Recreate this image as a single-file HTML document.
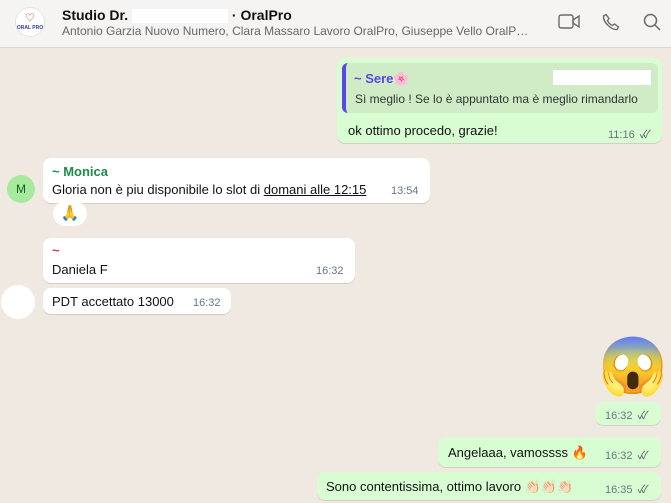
<!DOCTYPE html>
<html><head><meta charset="utf-8"><style>
*{margin:0;padding:0;box-sizing:border-box}
body{width:671px;height:503px;overflow:hidden;background:#efe9e1;font-family:"Liberation Sans","Noto Sans CJK JP",sans-serif;position:relative;color:#111}
.hdr{position:absolute;left:0;top:0;width:671px;height:48px;background:#f5f4f3;border-bottom:1px solid #d9d6d2}
.abs{position:absolute}
.b{position:absolute;border-radius:8px;background:#fff;box-shadow:0 1px 0.5px rgba(0,0,0,.12)}
.g{background:#d9fdd3}
.t{font-size:13px;white-space:nowrap}
.tm{font-size:11px;color:#667781;white-space:nowrap}
.ck{color:#556069;font-size:11px;letter-spacing:-4px;margin-left:2px}
</style></head><body>
<div class="hdr">
 <div class="abs" style="left:15px;top:7px;width:30px;height:30px;border-radius:50%;background:#fff;border:1px solid #e4e4e4;text-align:center">
  <div style="font-size:9px;color:#d33;margin-top:3px">♡</div>
  <div style="font-size:5px;font-weight:bold;color:#2a3d9a;margin-top:1px">ORAL PRO</div>
 </div>
 <div class="abs t" style="left:62px;top:7px;font-size:14px;font-weight:bold">Studio Dr. <span style="display:inline-block;width:96px;height:14px;background:#fff;vertical-align:middle"></span> · OralPro</div>
 <div class="abs" style="left:62px;top:24px;font-size:12px;color:#666;white-space:nowrap">Antonio Garzia Nuovo Numero, Clara Massaro Lavoro OralPro, Giuseppe Vello OralP…</div>
 <svg class="abs" style="left:558px;top:13px" width="24" height="18" viewBox="0 0 24 18" fill="none" stroke="#6a6a6a" stroke-width="1.4"><rect x="1" y="2" width="14" height="13" rx="2"/><path d="M15 7l6-4v11l-6-4z"/></svg>
 <svg class="abs" style="left:602px;top:13px" width="18" height="18" viewBox="0 0 18 18" fill="none" stroke="#6a6a6a" stroke-width="1.4"><path d="M4 1.5l3 4-1.5 2c1 2.5 2.5 4 5 5l2-1.5 4 3-1.5 2.5C9 17 1 9 1.5 3z"/></svg>
 <svg class="abs" style="left:643px;top:13px" width="18" height="18" viewBox="0 0 18 18" fill="none" stroke="#6a6a6a" stroke-width="1.5"><circle cx="7.5" cy="7.5" r="6"/><path d="M12 12l5 5"/></svg>
</div>

<div class="b g" style="left:337px;top:58px;width:325px;height:85px">
 <div class="abs" style="left:5px;top:5px;width:316px;height:50px;background:#cfecc7;border-radius:6px;border-left:4px solid #5b46e6"></div>
 <div class="abs t" style="left:17px;top:13px;color:#5b46e6;font-weight:bold">~ Sere🌸</div>
 <div class="abs" style="left:216px;top:12px;width:98px;height:15px;background:#fff"></div>
 <div class="abs" style="left:18px;top:34px;font-size:12px;white-space:nowrap;color:#333">Sì meglio ! Se lo è appuntato ma è meglio rimandarlo</div>
 <div class="abs t" style="left:11px;top:65px">ok ottimo procedo, grazie!</div>
 <div class="abs tm" style="left:271px;top:68px">11:16 <span class="ck">✓✓</span></div>
</div>

<div class="abs" style="left:7px;top:175px;width:28px;height:28px;border-radius:50%;background:#a6ea9d;text-align:center;line-height:28px;font-size:12px;color:#1a5c2a">M</div>
<div class="b" style="left:43px;top:158px;width:387px;height:45px">
 <div class="abs t" style="left:9px;top:6px;color:#1f8a4c;font-weight:bold">~ Monica</div>
 <div class="abs t" style="left:9px;top:24px">Gloria non è piu disponibile lo slot di <span style="text-decoration:underline">domani alle 12:15</span></div>
 <div class="abs tm" style="left:348px;top:27px">13:54</div>
</div>
<div class="abs" style="left:53px;top:201px;width:34px;height:25px;border-radius:13px;background:#fff;text-align:center;font-size:15px;line-height:25px">🙏</div>

<div class="b" style="left:43px;top:238px;width:312px;height:45px">
 <div class="abs t" style="left:9px;top:5px;color:#d23a6d;font-weight:bold">~</div>
 <div class="abs t" style="left:9px;top:24px">Daniela F</div>
 <div class="abs tm" style="left:273px;top:27px">16:32</div>
</div>
<div class="abs" style="left:1px;top:285px;width:34px;height:34px;border-radius:50%;background:#fff"></div>
<div class="b" style="left:43px;top:288px;width:188px;height:26px">
 <div class="abs t" style="left:9px;top:6px">PDT accettato 13000</div>
 <div class="abs tm" style="left:150px;top:9px">16:32</div>
</div>

<div class="abs" style="left:598px;top:334px;font-size:56px;line-height:64px">😱</div>
<div class="b g" style="left:595px;top:402px;width:66px;height:23px">
 <div class="abs tm" style="left:10px;top:5px">16:32 <span class="ck">✓✓</span></div>
</div>
<div class="b g" style="left:438px;top:437px;width:223px;height:30px">
 <div class="abs t" style="left:10px;top:8px">Angelaaa, vamossss 🔥</div>
 <div class="abs tm" style="left:167px;top:10px">16:32 <span class="ck">✓✓</span></div>
</div>
<div class="b g" style="left:317px;top:472px;width:344px;height:28px">
 <div class="abs t" style="left:9px;top:7px">Sono contentissima, ottimo lavoro 👏🏻👏🏻👏🏻</div>
 <div class="abs tm" style="left:288px;top:9px">16:35 <span class="ck">✓✓</span></div>
</div>
</body></html>
